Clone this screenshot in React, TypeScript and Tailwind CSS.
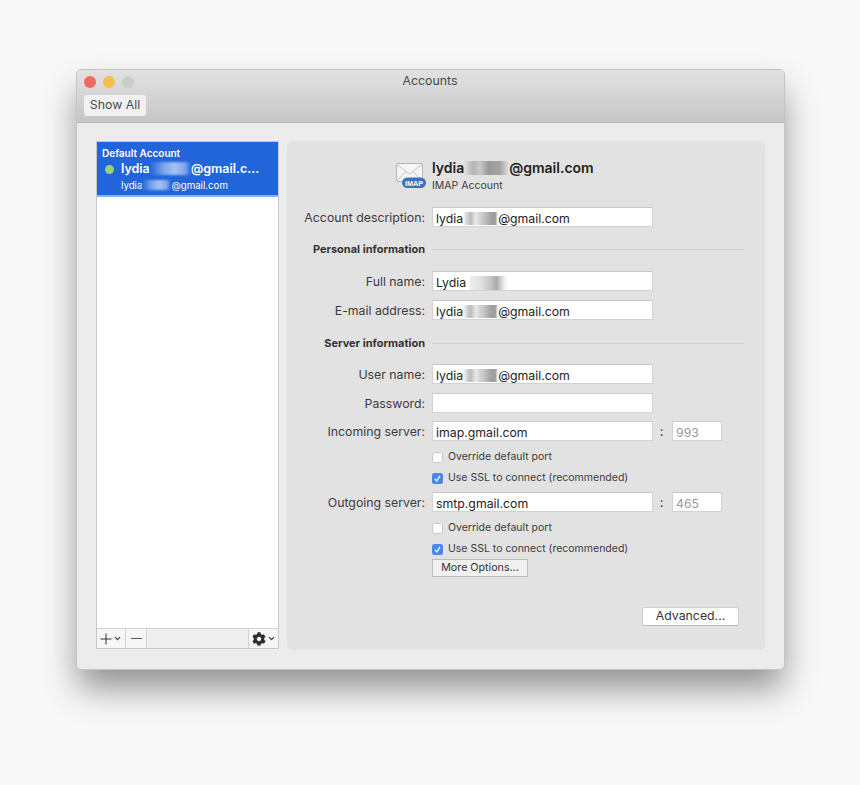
import React from "react";
import { ChevronDown } from "lucide-react";
import { FaCog } from "react-icons/fa";

const FONT = "font-['Inter','Liberation_Sans',sans-serif]";

function FieldSmudge({ w = "w-[35px]" }: { w?: string }) {
  return (
    <span
      className={`inline-block ${w} h-[13px] blur-[0.5px] bg-[linear-gradient(90deg,#fff_0%,#d8d8d8_10%,#bcbcbc_22%,#e8e8e8_36%,#d4d4d4_48%,#c4c4c4_60%,#a4a4a4_78%,#999_92%,#fff_100%)]`}
    />
  );
}

function Field({
  children,
  w = "w-[221px]",
  gray = false,
}: {
  children?: React.ReactNode;
  w?: string;
  gray?: boolean;
}) {
  return (
    <div
      className={`${w} h-[20px] bg-white border border-[#d2d2d2] border-t-[#c8c8c8] pl-[3px] pt-[3px] flex items-center whitespace-nowrap text-[12.3px] leading-[16px] ${gray ? "text-[#9a9a9a]" : "text-[#1e1e1e]"}`}
    >
      {children}
    </div>
  );
}

function Row({
  label,
  children,
  className = "",
}: {
  label: string;
  children?: React.ReactNode;
  className?: string;
}) {
  return (
    <div className={`flex items-center gap-[7px] h-[20px] ${className}`}>
      <div className="w-[138px] pt-[2px] text-right text-[12.3px] leading-[16px] text-[#3c3c3c] whitespace-nowrap">{label}</div>
      {children}
    </div>
  );
}

function Section({ label, className = "" }: { label: string; className?: string }) {
  return (
    <div className={`flex items-center gap-[7px] h-[14px] ${className}`}>
      <div className="w-[138px] text-right text-[11px] font-bold text-[#333] whitespace-nowrap">{label}</div>
      <div className="w-[312px] h-[1px] bg-[#d0d0d0]" />
    </div>
  );
}

function Check({ checked, label, className = "" }: { checked?: boolean; label: string; className?: string }) {
  return (
    <div className={`flex items-center h-[14px] pl-[145px] gap-[5px] ${className}`}>
      <div
        className={`w-[11px] h-[11px] rounded-[2.5px] flex items-center justify-center ${checked ? "bg-[#4b86ee]" : "bg-white border border-[#c6c6c6]"}`}
      >
        {checked && (
          <svg viewBox="0 0 11 11" className="w-[11px] h-[11px]">
            <path d="M3 5.8 L4.8 8 L8 2.8" fill="none" stroke="#fff" strokeWidth="1.3" />
          </svg>
        )}
      </div>
      <span className="text-[10.5px] text-[#3c3c3c] whitespace-nowrap">{label}</span>
    </div>
  );
}

function MailIcon() {
  return (
    <svg viewBox="0 0 30 30" className="w-[30px] h-[30px] shrink-0">
      <rect x="0.5" y="3.5" width="26" height="18" rx="1.5" fill="#f5f5f5" stroke="#a8a8a8" strokeWidth="0.8" />
      <path d="M1 4.5 L13.5 14 L26 4.5 M1 21 L10 11.5 M26 21 L17 11.5" fill="none" stroke="#bdbdbd" strokeWidth="0.9" />
      <rect x="6" y="17.5" width="24" height="10.5" rx="5.2" fill="#3a74b8" />
      <text x="18" y="25.6" textAnchor="middle" fontSize="7.2" fontWeight="700" fill="#fff" fontFamily="Liberation Sans, sans-serif">
        IMAP
      </text>
    </svg>
  );
}

export default function App() {
  return (
    <div className={`w-[860px] h-[785px] overflow-hidden bg-[#f8f8f8] pt-[69px] pl-[76px] ${FONT}`}>
      <div className="w-[709px] h-[601px] rounded-[5px] overflow-hidden bg-[#ececec] border border-[#c4c4c4] flex flex-col shadow-[0_20px_34px_-2px_rgba(0,0,0,0.42)]">
        {/* Title bar */}
        <div className="h-[53px] shrink-0 bg-[linear-gradient(180deg,#e2e2e2,#c6c6c6)] border-b border-[#b4b4b4] pl-[7px] flex flex-col">
          <div className="relative h-[24px] flex items-center gap-[7px]">
            <div className="w-[12px] h-[12px] rounded-full bg-[#ef6a5f]" />
            <div className="w-[12px] h-[12px] rounded-full bg-[#f6bd4f]" />
            <div className="w-[12px] h-[12px] rounded-full bg-[#cbcbcb]" />
            <div className="absolute left-0 right-[8px] top-[2px] text-center text-[12.3px] text-[#4a4a4a]">Accounts</div>
          </div>
          <div className="mt-[1px] w-[62px] h-[21px] rounded-[3px] bg-[#f1f1f1] flex items-center justify-center text-[12.3px] text-[#4a4a4a]">
            Show All
          </div>
        </div>

        {/* Body */}
        <div className="flex-1 flex gap-[8px] pl-[19px] pt-[18px]">
          {/* Account list */}
          <div className="w-[183px] h-[508px] flex flex-col bg-white border border-[#c8c8c8]">
            <div className="h-[55px] shrink-0 bg-[#2264d9] border-b-2 border-[#8fb0ec] text-white pl-[5px] pt-[5px]">
              <div className="text-[10px] leading-[12px] font-semibold">Default Account</div>
              <div className="flex items-center h-[19px] mt-[1px]">
                <div className="w-[9px] h-[9px] rounded-full bg-[#95d27a] ml-[3px] mr-[7px]" />
                <span className="text-[12.5px] font-semibold whitespace-nowrap">
                  lydia
                  <span className="inline-block w-[41px] h-[13px] align-[-2px] blur-[1px] bg-[linear-gradient(90deg,#2264d9,#7fa8ec_35%,#a5c2f2_60%,#7fa8ec_85%,#2264d9)]" />
                  @gmail.c...
                </span>
              </div>
              <div className="text-[9.7px] leading-[13px] pl-[19px] whitespace-nowrap">
                lydia
                <span className="inline-block w-[29px] h-[10px] align-[-1px] blur-[1px] bg-[linear-gradient(90deg,#2264d9,#7fa8ec_35%,#a5c2f2_60%,#7fa8ec_85%,#2264d9)]" />
                @gmail.com
              </div>
            </div>
            <div className="flex-1" />
            <div className="h-[20px] shrink-0 flex bg-[#efefef] border-t border-[#d2d2d2] text-[#333]">
              <div className="w-[29px] border-r border-[#d2d2d2] bg-[#f6f6f6] flex items-center justify-center gap-[1px]">
                <svg viewBox="0 0 12 12" className="w-[12px] h-[12px]">
                  <path d="M6 0.5 V11.5 M0.5 6 H11.5" stroke="#333" strokeWidth="1" fill="none" />
                </svg>
                <ChevronDown className="w-[9px] h-[9px]" strokeWidth={3} />
              </div>
              <div className="w-[21px] border-r border-[#d2d2d2] bg-[#f6f6f6] flex items-center justify-center">
                <div className="w-[11px] h-[1px] bg-[#555]" />
              </div>
              <div className="flex-1 border-r border-[#d2d2d2]" />
              <div className="w-[29px] bg-[#f6f6f6] flex items-center justify-center gap-[1px]">
                <FaCog className="w-[14px] h-[14px] text-[#2e2e2e]" />
                <ChevronDown className="w-[9px] h-[9px]" strokeWidth={3} />
              </div>
            </div>
          </div>

          {/* Settings panel */}
          <div className="w-[478px] h-[509px] rounded-[5px] bg-[#e2e2e2] pt-[18px]">
            <div className="flex h-[35px] pl-[109px] gap-[6px]">
              <div className="pt-[1px]">
                <MailIcon />
              </div>
              <div className="flex flex-col">
                <div className="h-[17px] flex items-center text-[14px] font-semibold text-[#222] whitespace-nowrap">
                  lydia
                  <span className="inline-block w-[45px] h-[14px] blur-[0.7px] bg-[linear-gradient(90deg,#e2e2e2,#b4b4b4_20%,#c8c8c8_35%,#999_55%,#a4a4a4_80%,#e2e2e2)]" />
                  @gmail.com
                </div>
                <div className="mt-[2px] text-[10.5px] leading-[16px] text-[#3c3c3c]">IMAP Account</div>
              </div>
            </div>

            <Row label="Account description:" className="mt-[13px]">
              <Field>
                lydia
                <FieldSmudge />
                @gmail.com
              </Field>
            </Row>
            <Section label="Personal information" className="mt-[15px]" />
            <Row label="Full name:" className="mt-[15px]">
              <Field>
                Lydia&nbsp;
                <span className="inline-block w-[38px] h-[14px] blur-[0.7px] bg-[linear-gradient(90deg,#eee,#e0e0e0_30%,#c4c4c4_55%,#aaa_70%,#eee_90%,#fff)]" />
              </Field>
            </Row>
            <Row label="E-mail address:" className="mt-[9px]">
              <Field>
                lydia
                <FieldSmudge />
                @gmail.com
              </Field>
            </Row>
            <Section label="Server information" className="mt-[16px]" />
            <Row label="User name:" className="mt-[14px]">
              <Field>
                lydia
                <FieldSmudge />
                @gmail.com
              </Field>
            </Row>
            <Row label="Password:" className="mt-[9px]">
              <Field />
            </Row>
            <Row label="Incoming server:" className="mt-[8px]">
              <Field>imap.gmail.com</Field>
              <span className="w-[17px] -ml-[7px] text-center text-[13px] leading-[16px] text-[#333]">:</span>
              <div className="-ml-[5px]">
                <Field w="w-[50px]" gray>
                  993
                </Field>
              </div>
            </Row>
            <Check label="Override default port" className="mt-[9px]" />
            <Check checked label="Use SSL to connect (recommended)" className="mt-[7px]" />
            <Row label="Outgoing server:" className="mt-[7px]">
              <Field>smtp.gmail.com</Field>
              <span className="w-[17px] -ml-[7px] text-center text-[13px] leading-[16px] text-[#333]">:</span>
              <div className="-ml-[5px]">
                <Field w="w-[50px]" gray>
                  465
                </Field>
              </div>
            </Row>
            <Check label="Override default port" className="mt-[9px]" />
            <Check checked label="Use SSL to connect (recommended)" className="mt-[7px]" />
            <div className="pl-[145px] mt-[3px]">
              <div className="w-[96px] h-[18px] bg-[#f0f0f0] border border-[#bdbdbd] flex items-center justify-center text-[10.7px] text-[#333]">
                More Options...
              </div>
            </div>
            <div className="pl-[355px] mt-[30px]">
              <div className="w-[97px] h-[19px] rounded-[3px] bg-white border border-[#d0d0d0] border-b-[#bcbcbc] flex items-center justify-center text-[12.3px] text-[#333]">
                Advanced...
              </div>
            </div>
          </div>
        </div>
      </div>
    </div>
  );
}
